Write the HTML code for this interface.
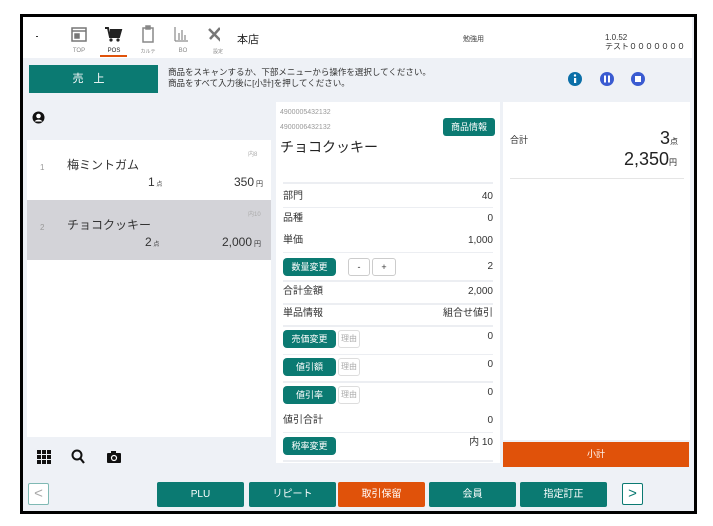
<!DOCTYPE html>
<html><head><meta charset="utf-8"><style>
*{margin:0;padding:0;box-sizing:border-box}
body{width:713px;height:526px;background:#fff;position:relative;overflow:hidden;font-family:"Liberation Sans","Noto Sans CJK JP",sans-serif;color:#333}
.a{position:absolute}
.frame{left:20px;top:14px;width:677px;height:500px;border:3px solid #000;background:#eef1f6}
.teal{background:#0b7a72;color:#fff;border-radius:3px;font-size:9px;text-align:center}
.btn{position:absolute;top:482px;height:25px;width:87px;background:#0b7a72;color:#fff;font-size:10px;text-align:center;line-height:25px;border-radius:2px}
.row{position:absolute;left:283px;width:210px;font-size:10px;height:20px;line-height:20px}
.row span{float:right}
.ln{position:absolute;left:283px;width:210px;height:2px;background:#eceef2}
.rs{position:absolute;left:338px;width:22px;height:18px;border:1px solid #ddd;border-radius:3px;font-size:8px;color:#aaa;line-height:16px;text-align:center;background:#fff}
.nav{position:absolute;top:48px;font-size:6px;color:#888;text-align:center;width:24px}
</style></head><body>
<div class="a frame"></div>
<div class="a" style="left:23px;top:17px;width:669px;height:41px;background:#fff"></div>
<div class="a" style="left:36px;top:36px;width:2px;height:1px;background:#333"></div>
<svg class="a" style="left:70px;top:25px" width="150" height="22" viewBox="0 0 150 22">
<g fill="none" stroke="#777" stroke-width="1.5"><rect x="2" y="3" width="14" height="13"/><line x1="2" y1="6" x2="16" y2="6"/><rect x="5" y="9" width="4" height="4" fill="#777"/></g>
<g fill="#222"><path d="M35 3h3l2 9h9l2-7H40" stroke="#222" stroke-width="2" fill="none"/><rect x="40" y="6" width="10" height="5"/><circle cx="41" cy="15" r="1.6"/><circle cx="48" cy="15" r="1.6"/></g>
<g fill="none" stroke="#888" stroke-width="1.5"><rect x="73" y="3" width="10" height="14"/><rect x="76" y="1" width="4" height="3" fill="#888"/></g>
<g stroke="#888" stroke-width="1.2"><line x1="105" y1="2" x2="105" y2="16"/><line x1="105" y1="16" x2="118" y2="16"/><line x1="109" y1="8" x2="109" y2="15"/><line x1="112" y1="5" x2="112" y2="15"/><line x1="115" y1="10" x2="115" y2="15"/></g>
<g stroke="#777" stroke-width="2.5"><line x1="139" y1="4" x2="151" y2="16"/><line x1="150" y1="3" x2="140" y2="14"/></g>
</svg>
<div class="nav" style="left:67px">TOP</div>
<div class="nav" style="left:102px;color:#222">POS</div>
<div class="a" style="left:100px;top:55px;width:27px;height:2px;background:#e0520a"></div>
<div class="nav" style="left:136px;font-size:5px">カルテ</div>
<div class="nav" style="left:171px">BO</div>
<div class="nav" style="left:206px;font-size:5px">設定</div>
<div class="a" style="left:237px;top:31px;font-size:11px;color:#222">本店</div>
<div class="a" style="left:463px;top:34px;font-size:7px;color:#444">勉強用</div>
<div class="a" style="left:605px;top:33px;font-size:8px;line-height:9px;color:#333">1.0.52<br>テスト０００００００</div>
<div class="a teal" style="left:29px;top:65px;width:129px;height:28px;line-height:28px;font-size:11px;letter-spacing:10px;border-radius:0">売上</div>
<div class="a" style="left:168px;top:67px;font-size:8.5px;line-height:11px;color:#333">商品をスキャンするか、下部メニューから操作を選択してください。<br>商品をすべて入力後に[小計]を押してください。</div>
<svg class="a" style="left:567px;top:71px" width="80" height="16">
<circle cx="8" cy="8" r="7" fill="#0b6fa8"/><rect x="7" y="7" width="2.2" height="5" fill="#fff"/><circle cx="8" cy="4.5" r="1.2" fill="#fff"/>
<circle cx="40" cy="8" r="7" fill="#3a5bd1"/><rect x="37" y="4.5" width="2" height="7" fill="#fff"/><rect x="41" y="4.5" width="2" height="7" fill="#fff"/>
<circle cx="71" cy="8" r="7" fill="#3a5bd1"/><rect x="68" y="5" width="6" height="6" fill="#fff"/>
</svg>
<svg class="a" style="left:32px;top:111px" width="13" height="13"><circle cx="6.5" cy="6.5" r="6" fill="#111"/><circle cx="6.5" cy="5" r="2.3" fill="#fff"/><path d="M2.5 10.5a4.5 3.5 0 0 1 8 0" fill="#fff"/></svg>
<div class="a" style="left:27px;top:140px;width:244px;height:297px;background:#fff"></div>
<div class="a" style="left:27px;top:200px;width:244px;height:60px;background:#d3d3d8"></div>
<div class="a" style="left:40px;top:163px;font-size:8px;color:#999">1</div>
<div class="a" style="left:67px;top:156px;font-size:12px;color:#333">梅ミントガム</div>
<div class="a" style="left:248px;top:149px;font-size:6px;color:#aaa">内8</div>
<div class="a" style="left:148px;top:175px;font-size:12px">1<small style="font-size:6px"> 点</small></div>
<div class="a" style="left:234px;top:175px;font-size:12px">350<small style="font-size:7px"> 円</small></div>
<div class="a" style="left:40px;top:223px;font-size:8px;color:#999">2</div>
<div class="a" style="left:67px;top:216px;font-size:12px;color:#333">チョコクッキー</div>
<div class="a" style="left:248px;top:209px;font-size:6px;color:#aaa">内10</div>
<div class="a" style="left:145px;top:235px;font-size:12px">2<small style="font-size:6px"> 点</small></div>
<div class="a" style="left:222px;top:235px;font-size:12px">2,000<small style="font-size:7px"> 円</small></div>
<svg class="a" style="left:37px;top:449px" width="90" height="16">
<g fill="#111"><rect x="0" y="1" width="4" height="4"/><rect x="5" y="1" width="4" height="4"/><rect x="10" y="1" width="4" height="4"/><rect x="0" y="6" width="4" height="4"/><rect x="5" y="6" width="4" height="4"/><rect x="10" y="6" width="4" height="4"/><rect x="0" y="11" width="4" height="4"/><rect x="5" y="11" width="4" height="4"/><rect x="10" y="11" width="4" height="4"/></g>
<circle cx="40" cy="6" r="4.5" fill="none" stroke="#111" stroke-width="2"/><line x1="43" y1="9" x2="47" y2="14" stroke="#111" stroke-width="2.2"/>
<rect x="70" y="4" width="14" height="10" rx="1" fill="#111"/><rect x="74" y="2" width="5" height="3" fill="#111"/><circle cx="77" cy="9" r="2.5" fill="none" stroke="#fff" stroke-width="1.2"/>
</svg>
<div class="a" style="left:276px;top:102px;width:224px;height:361px;background:#fff"></div>
<div class="a" style="left:280px;top:109px;font-size:7px;color:#999">4900005432132</div>
<div class="a" style="left:280px;top:124px;font-size:7px;color:#999">4900006432132</div>
<div class="a teal" style="left:443px;top:118px;width:52px;height:18px;line-height:18px;font-size:9px">商品情報</div>
<div class="a" style="left:280px;top:137px;font-size:14px;color:#222">チョコクッキー</div>
<div class="ln" style="top:182px"></div>
<div class="row" style="top:187px">部門<span>40</span></div>
<div class="ln" style="top:207px;height:1px"></div>
<div class="row" style="top:209px">品種<span>0</span></div>
<div class="row" style="top:231px">単価<span>1,000</span></div>
<div class="ln" style="top:252px;height:1px"></div>
<div class="a teal" style="left:283px;top:258px;width:53px;height:18px;line-height:18px;border-radius:4px">数量変更</div>
<div class="a" style="left:348px;top:258px;width:22px;height:18px;border:1px solid #ccc;border-radius:3px;font-size:9px;text-align:center;line-height:16px">-</div>
<div class="a" style="left:372px;top:258px;width:24px;height:18px;border:1px solid #ccc;border-radius:3px;font-size:9px;text-align:center;line-height:16px">+</div>
<div class="row" style="top:257px">&nbsp;<span>2</span></div>
<div class="ln" style="top:280px"></div>
<div class="row" style="top:282px">合計金額<span>2,000</span></div>
<div class="ln" style="top:303px"></div>
<div class="row" style="top:304px">単品情報<span>組合せ値引</span></div>
<div class="ln" style="top:325px"></div>
<div class="a teal" style="left:283px;top:330px;width:53px;height:18px;line-height:18px;border-radius:4px">売価変更</div><div class="rs" style="top:330px">理由</div>
<div class="row" style="top:327px">&nbsp;<span>0</span></div>
<div class="ln" style="top:354px;height:1px"></div>
<div class="a teal" style="left:283px;top:358px;width:53px;height:18px;line-height:18px;border-radius:4px">値引額</div><div class="rs" style="top:358px">理由</div>
<div class="row" style="top:355px">&nbsp;<span>0</span></div>
<div class="ln" style="top:381px"></div>
<div class="a teal" style="left:283px;top:386px;width:53px;height:18px;line-height:18px;border-radius:4px">値引率</div><div class="rs" style="top:386px">理由</div>
<div class="row" style="top:383px">&nbsp;<span>0</span></div>
<div class="row" style="top:411px">値引合計<span>0</span></div>
<div class="ln" style="top:432px;height:1px"></div>
<div class="a teal" style="left:283px;top:437px;width:53px;height:18px;line-height:18px;border-radius:4px">税率変更</div>
<div class="row" style="top:433px">&nbsp;<span>内 10</span></div>
<div class="ln" style="top:460px"></div>
<div class="a" style="left:503px;top:102px;width:187px;height:338px;background:#fff"></div>
<div class="a" style="left:510px;top:133px;font-size:9px">合計</div>
<div class="a" style="left:660px;top:128px;font-size:18px;color:#222">3<small style="font-size:8px">点</small></div>
<div class="a" style="left:624px;top:149px;font-size:18px;color:#222">2,350<small style="font-size:8px">円</small></div>
<div class="a" style="left:510px;top:178px;width:174px;height:1px;background:#e5e5e5"></div>
<div class="a" style="left:503px;top:442px;width:186px;height:25px;background:#e0520a;color:#fff;font-size:9px;text-align:center;line-height:25px">小計</div>
<div class="a" style="left:28px;top:483px;width:21px;height:22px;border:1px solid #7fb9b4;border-radius:2px;background:#fff;color:#aaa;font-size:15px;text-align:center;line-height:19px">&lt;</div>
<div class="btn" style="left:157px">PLU</div>
<div class="btn" style="left:249px">リピート</div>
<div class="btn" style="left:338px;background:#e0520a">取引保留</div>
<div class="btn" style="left:429px">会員</div>
<div class="btn" style="left:520px">指定訂正</div>
<div class="a" style="left:622px;top:483px;width:21px;height:22px;border:1px solid #0b7a72;border-radius:2px;background:#fff;color:#0b7a72;font-size:15px;text-align:center;line-height:19px">&gt;</div>
</body></html>
